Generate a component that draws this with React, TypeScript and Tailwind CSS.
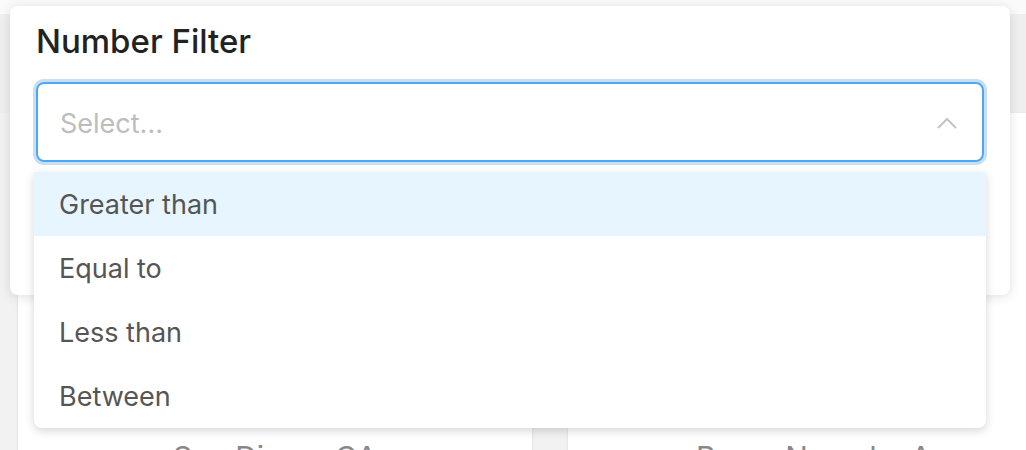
const options = ["Greater than", "Equal to", "Less than", "Between"];

export default function App() {
  return (
    <div className="relative w-[1026px] h-[450px] overflow-hidden bg-[#f2f2f2] font-['Inter',sans-serif]">
      {/* page behind the filter */}
      <div className="h-[14px] bg-[#fafafa]" />
      <div className="h-[99px] bg-[#efefef]" />
      <div className="flex gap-[36px] pl-[18px]">
        <div className="w-[514px] h-[400px] shrink-0 bg-white shadow-sm pt-[322px] text-center text-[30px] text-[#888]">
          San Diego, CA
        </div>
        <div className="w-[514px] h-[400px] shrink-0 bg-white shadow-sm pt-[322px] pl-[128px] text-[30px] text-[#888]">
          Reno, Nevada, A
        </div>
      </div>

      {/* filter popover */}
      <div className="absolute left-[10px] top-[6px] w-[1000px] h-[289px] rounded-[8px] bg-white shadow-[0_2px_12px_rgba(0,0,0,0.12)] px-[26px]">
        <div className="pt-[15px] text-[33px] font-medium leading-[40px] text-[#222]">Number Filter</div>
        <div className="mt-[21px] h-[80px] rounded-[8px] border-2 border-[#4aa8f5] ring-[3px] ring-[#c9def3] flex items-center justify-between pl-[22px] pr-[24px]">
          <span className="mt-[5px] text-[27px] text-[#bdbdbd]">Select...</span>
          <svg className="mt-[2px]" width="22" height="14" viewBox="0 0 22 14" fill="none" stroke="#c4c4c4" strokeWidth="2">
            <path d="M2 12 L11 3 L20 12" />
          </svg>
        </div>
      </div>

      {/* dropdown menu */}
      <div className="absolute left-[34px] top-[172px] w-[952px] rounded-b-[8px] bg-white shadow-[0_3px_10px_rgba(0,0,0,0.16)] overflow-hidden">
        {options.map((o, i) => (
          <div
            key={o}
            className={
              i === 0
                ? "h-[64px] flex items-center pl-[25px] pt-[2px] text-[27px] text-[#555] bg-[#e6f5fe]"
                : "h-[64px] flex items-center pl-[25px] pt-[2px] text-[27px] text-[#555]"
            }
          >
            {o}
          </div>
        ))}
      </div>
    </div>
  );
}
